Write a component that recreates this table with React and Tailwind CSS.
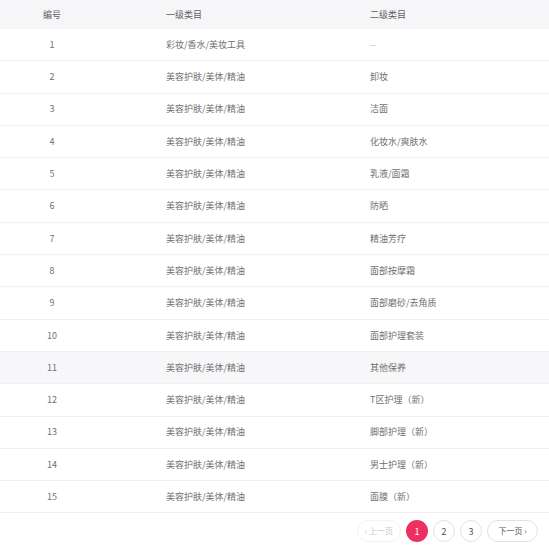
import React from "react";

const rows = [
  ["1", "彩妆/香水/美妆工具", "--"],
  ["2", "美容护肤/美体/精油", "卸妆"],
  ["3", "美容护肤/美体/精油", "洁面"],
  ["4", "美容护肤/美体/精油", "化妆水/爽肤水"],
  ["5", "美容护肤/美体/精油", "乳液/面霜"],
  ["6", "美容护肤/美体/精油", "防晒"],
  ["7", "美容护肤/美体/精油", "精油芳疗"],
  ["8", "美容护肤/美体/精油", "面部按摩霜"],
  ["9", "美容护肤/美体/精油", "面部磨砂/去角质"],
  ["10", "美容护肤/美体/精油", "面部护理套装"],
  ["11", "美容护肤/美体/精油", "其他保养"],
  ["12", "美容护肤/美体/精油", "T区护理（新）"],
  ["13", "美容护肤/美体/精油", "脚部护理（新）"],
  ["14", "美容护肤/美体/精油", "男士护理（新）"],
  ["15", "美容护肤/美体/精油", "面膜（新）"],
];

export default function App() {
  return (
    <div
      className="w-[549px] h-[550px] bg-white text-[#707070] text-[9px] overflow-hidden"
      style={{ fontFamily: '"Noto Sans CJK SC", "Noto Sans", sans-serif' }}
    >
      <div className="flex items-center h-[29px] bg-[#f6f6f8] text-[#606060]">
        <div className="w-[104px] text-center">编号</div>
        <div className="w-[266px] pl-[62px]">一级类目</div>
        <div className="flex-1">二级类目</div>
      </div>
      {rows.map((r, i) => (
        <div
          key={r[0]}
          className={`flex items-center h-[32.3px] border-b border-[#f1f1f3] ${
            i === 10 ? "bg-[#f7f7f9]" : "bg-white"
          }`}
        >
          <div className="w-[104px] text-center">{r[0]}</div>
          <div className="w-[266px] pl-[62px]">{r[1]}</div>
          <div className={`flex-1 ${r[2] === "--" ? "text-[#bbb]" : ""}`}>{r[2]}</div>
        </div>
      ))}
      <div className="flex justify-end items-center gap-[5px] pr-[11px] pt-[7px]">
        <div className="flex items-center justify-center h-[22px] w-[44px] rounded-full border border-[#f3f3f3] text-[#c8c8c8] text-[8px]">
          ‹ 上一页
        </div>
        <div className="flex items-center justify-center h-[22px] w-[22px] rounded-full bg-[#ec3060] text-white text-[9px]">
          1
        </div>
        <div className="flex items-center justify-center h-[22px] w-[22px] rounded-full border border-[#e2e2e2] text-[#555] text-[9px]">
          2
        </div>
        <div className="flex items-center justify-center h-[22px] w-[22px] rounded-full border border-[#e2e2e2] text-[#555] text-[9px]">
          3
        </div>
        <div className="flex items-center justify-center h-[22px] w-[51px] rounded-full border border-[#e2e2e2] text-[#555] text-[8px]">
          下一页 ›
        </div>
      </div>
    </div>
  );
}
